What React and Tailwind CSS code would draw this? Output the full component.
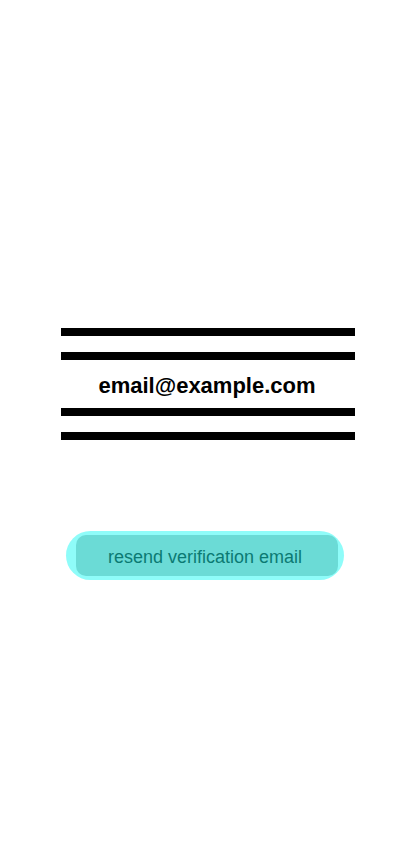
import React from 'react';

export default function App() {
  return (
    <div className="min-h-[852px] w-[414px] bg-white flex flex-col pt-[328px]" style={{ fontFamily: '"Liberation Sans", Arial, sans-serif' }}>
      {/* Email block */}
      <div className="w-[294px] ml-[61px] flex flex-col">
        <div className="h-2 bg-black" />
        <div className="h-2 bg-black mt-4" />
        <div className="h-12 pt-[3px] pr-[2px] flex items-center justify-center text-[22px] font-bold text-black">
          email@example.com
        </div>
        <div className="h-2 bg-black" />
        <div className="h-2 bg-black mt-4" />
      </div>

      {/* Resend */}
      <div className="mt-[91px] ml-[66px] w-[278px] h-[49px] rounded-full bg-[#8ffcf9] pl-[10px] pr-[6px] py-1">
        <button className="w-full h-full pt-[3px] pr-1 rounded-[10px] bg-[#6bdbd6] text-[#0b7a73] text-[18px] flex items-center justify-center">
          resend verification email
        </button>
      </div>
    </div>
  );
}
